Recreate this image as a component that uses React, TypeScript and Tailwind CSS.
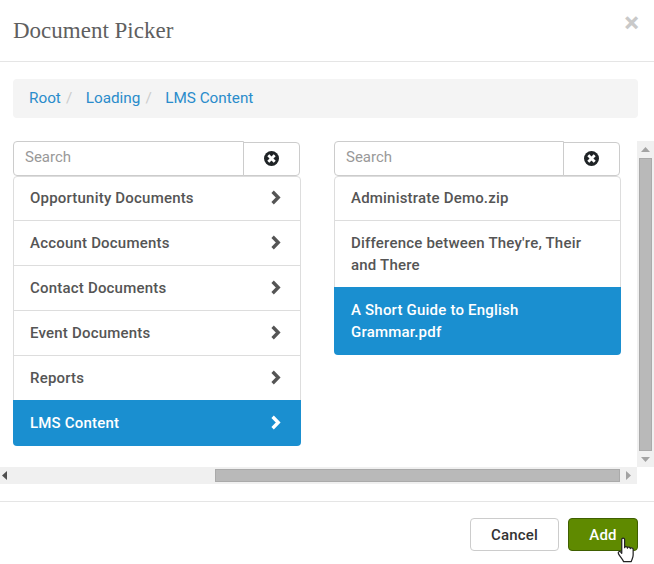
import type { ReactNode } from "react";

const folders = [
  "Opportunity Documents",
  "Account Documents",
  "Contact Documents",
  "Event Documents",
  "Reports",
];

const files = ["Administrate Demo.zip", "Difference between They're, Their and There"];

function ClearIcon() {
  return (
    <svg viewBox="0 0 15 15" className="mt-[-1px] h-[15px] w-[15px]">
      <circle cx="7.5" cy="7.5" r="7.5" fill="#1f2326" />
      <path d="M4.3 4.3l6.4 6.4M10.7 4.3l-6.4 6.4" stroke="#fff" strokeWidth="2.8" />
    </svg>
  );
}

function Chevron({ className }: { className: string }) {
  return (
    <svg viewBox="0 0 11 15" fill="none" className={"h-[15px] w-[11px] " + className}>
      <path d="M2.6 1.8L8.2 7.5L2.6 13.2" stroke="currentColor" strokeWidth="3.4" />
    </svg>
  );
}

function SearchBox() {
  return (
    <div className="flex h-[35px] items-stretch pr-px">
      <div className="flex h-[35px] flex-1 items-center rounded-l-[4px] border border-[#cccccc] pb-[2px] pl-[11px] text-[15px] text-[#999999]">
        Search
      </div>
      <div className="-ml-px mt-px flex h-[34px] w-[57px] items-center justify-center rounded-r-[4px] border border-[#cccccc]">
        <ClearIcon />
      </div>
    </div>
  );
}

function Triangle({ dir }: { dir: "up" | "down" | "left" | "right" }) {
  const paths = { up: "M0 5L4.5 0L9 5Z", down: "M0 0L9 0L4.5 5Z", left: "M5 0L5 9L0 4.5Z", right: "M0 0L0 9L5 4.5Z" };
  const size = dir === "up" || dir === "down" ? "h-[5px] w-[9px]" : "h-[9px] w-[5px]";
  const viewBox = dir === "up" || dir === "down" ? "0 0 9 5" : "0 0 5 9";
  const fill = dir === "left" ? "#505050" : "#a3a3a3";
  return (
    <svg viewBox={viewBox} className={size}>
      <path d={paths[dir]} fill={fill} />
    </svg>
  );
}

function Crumb({ children, last }: { children: ReactNode; last?: boolean }) {
  return (
    <>
      <span>{children}</span>
      {!last && <span className="ml-[5px] mr-[13.5px] text-[#cccccc]">/</span>}
    </>
  );
}

export default function App() {
  return (
    <div className="relative h-[564px] w-[654px] overflow-hidden bg-white font-['Roboto',sans-serif] text-[#555555]">
      <div className="flex h-[62px] items-start justify-between border-b border-[#e5e5e5] pl-[13px] pr-[15px]">
        <h4 className="mt-[16px] font-['Liberation_Serif',serif] text-[23px] leading-[30px] text-[#5f5f5f]">Document Picker</h4>
        <span className="mt-[8px] text-[28px] font-bold leading-[30px] text-[#c9c9c9]">×</span>
      </div>

      <div className="ml-[13px] mt-[17px] flex h-[39px] w-[625px] items-center rounded-[4px] bg-[#f4f4f4] pl-[16px] text-[15.3px] text-[#2a8ccb]">
        <Crumb>Root</Crumb>
        <Crumb>Loading</Crumb>
        <Crumb last>LMS Content</Crumb>
      </div>

      <div className="mt-[23px] flex h-[326px]">
        <div className="flex w-[637px] items-start gap-[33px] pl-[13px]">
          <div className="w-[288px]">
            <SearchBox />
            <ul className="text-[15px] font-medium tracking-[0.2px]">
              {folders.map((name, i) => (
                <li
                  key={name}
                  className={
                    i === 0
                      ? "flex h-[45px] items-center justify-between rounded-t-[4px] border border-[#dddddd] pl-[16px] pr-[19px]"
                      : "-mt-px flex h-[46px] items-center justify-between border border-[#dddddd] pl-[16px] pr-[19px]"
                  }
                >
                  {name}
                  <Chevron className={i === 0 ? "-mt-[2px] text-[#555555]" : "-mt-px text-[#555555]"} />
                </li>
              ))}
              <li className="-mt-px flex h-[46px] items-center justify-between rounded-b-[4px] bg-[#1a8fd0] pl-[17px] pr-[20px] text-white">
                LMS Content
                <Chevron className="-mt-px text-white" />
              </li>
            </ul>
          </div>

          <div className="w-[287px]">
            <SearchBox />
            <ul className="text-[15px] font-medium leading-[22px] tracking-[0.2px]">
              <li className="flex h-[45px] items-center rounded-t-[4px] border border-[#dddddd] px-[16px] pb-[2px]">{files[0]}</li>
              <li className="-mt-px flex h-[68px] items-center border border-[#dddddd] px-[16px]">{files[1]}</li>
              <li className="-mt-px flex h-[68px] items-center rounded-b-[4px] bg-[#1a8fd0] px-[17px] text-white">A Short Guide to English Grammar.pdf</li>
            </ul>
          </div>
        </div>

        <div className="flex w-[17px] flex-col items-center bg-[#f0f0f0]">
          <div className="flex h-[17px] items-center">
            <Triangle dir="up" />
          </div>
          <div className="h-[293px] w-[13px] border border-[#aaaaaa] bg-[#b9b9b9]" />
          <div className="flex h-[16px] items-center">
            <Triangle dir="down" />
          </div>
        </div>
      </div>

      <div className="flex h-[17px] w-[637px] items-center bg-[#f0f0f0]">
        <div className="flex w-[215px] items-center pl-[2px]">
          <Triangle dir="left" />
        </div>
        <div className="h-[13px] w-[405px] border border-[#aaaaaa] bg-[#b9b9b9]" />
        <div className="flex flex-1 justify-center">
          <Triangle dir="right" />
        </div>
      </div>

      <div className="mt-[17px] flex h-[63px] items-start justify-end gap-[9px] border-t border-[#e5e5e5] pr-[16px] pt-[16px] text-[15px] font-medium tracking-[0.2px]">
        <button className="h-[33px] w-[89px] rounded-[4px] border border-[#cccccc] bg-white pt-[2px] text-[#333333]">Cancel</button>
        <button className="h-[33px] w-[70px] rounded-[4px] border border-[#3f5f00] bg-[#5f8a00] pt-[2px] text-white">Add</button>
      </div>

      <svg viewBox="0 0 20 28" className="absolute left-[617px] top-[537px] h-[27px] w-[19px]">
        <path
          d="M5 2.5c0-2 3-2 3 0V11c0-1.5 3-1.5 3 .5 0-1.5 3-1.5 3 .5 0-1.2 3-1.2 3 .8v6c0 3-1.5 4.5-2 7H7c-1-2.5-4-5.5-5.5-8.5-.8-2 1.2-3 2.5-1.5L5 17Z"
          fill="#fff"
          stroke="#222"
          strokeWidth="1.3"
          strokeLinejoin="round"
        />
      </svg>
    </div>
  );
}
